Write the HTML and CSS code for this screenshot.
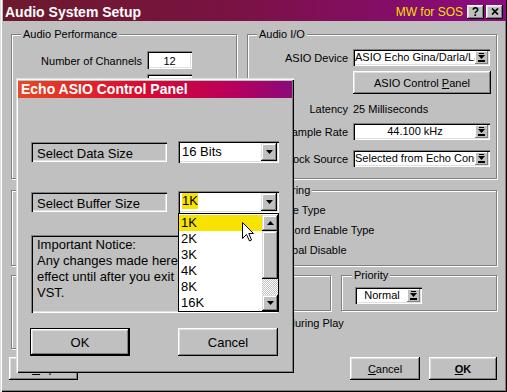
FILE: index.html
```html
<!DOCTYPE html>
<html lang="en">
<head>
    <meta charset="UTF-8">
    <meta name="viewport" content="width=device-width, initial-scale=1.0">
    <title>Audio System Setup</title>
    <link rel="stylesheet" href="styles.css">
</head>
<body>
    <div class="window">
        <div class="titlebar">
            <span class="title">Audio System Setup</span>
            <span class="brand">MW for SOS</span>
            <span class="tbtn">?</span>
            <span class="tbtn"><svg width="8" height="7" viewBox="0 0 8 7"><path d="M1 0.5l6 6M7 0.5l-6 6" stroke="#000" stroke-width="1.7"/></svg></span>
        </div>

        <div class="content">
            <div class="group perf">
                <span class="legend">Audio Performance</span>
                <div class="num-row first">
                    <span class="num-label">Number of Channels</span>
                    <span class="edit">12</span>
                </div>
                <div class="num-row">
                    <span class="num-label"></span>
                    <span class="edit"></span>
                </div>
            </div>

            <div class="group io">
                <span class="legend">Audio I/O</span>
                <div class="io-row first">
                    <span class="io-label">ASIO Device</span>
                    <div class="combo">
                        <span class="val">ASIO Echo Gina/Darla/Layla</span>
                        <span class="dd"><svg width="7" height="9" viewBox="0 0 7 9"><rect x="1" y="0" width="5" height="1"/><path d="M0 2h7L3.5 6z"/><rect x="0" y="7" width="7" height="2"/></svg></span>
                    </div>
                </div>
                <div class="io-row tall">
                    <span class="io-label"></span>
                    <div class="btn panel-btn">ASIO Control&nbsp;<u>P</u>anel</div>
                </div>
                <div class="io-row">
                    <span class="io-label">Latency</span>
                    <span>25 Milliseconds</span>
                </div>
                <div class="io-row">
                    <span class="io-label">Sample Rate</span>
                    <div class="combo">
                        <span class="val center">44.100 kHz</span>
                        <span class="dd"><svg width="7" height="9" viewBox="0 0 7 9"><rect x="1" y="0" width="5" height="1"/><path d="M0 2h7L3.5 6z"/><rect x="0" y="7" width="7" height="2"/></svg></span>
                    </div>
                </div>
                <div class="io-row clock">
                    <span class="io-label">Clock Source</span>
                    <div class="combo">
                        <span class="val">Selected from Echo Console</span>
                        <span class="dd"><svg width="7" height="9" viewBox="0 0 7 9"><rect x="1" y="0" width="5" height="1"/><path d="M0 2h7L3.5 6z"/><rect x="0" y="7" width="7" height="2"/></svg></span>
                    </div>
                </div>
            </div>

            <div class="group misc"></div>

            <div class="group monitor">
                <span class="legend">Monitoring</span>
                <div class="radio-row first"><span class="radio"></span>Tape Type</div>
                <div class="radio-row"><span class="radio on"></span>Record Enable Type</div>
                <div class="radio-row"><span class="radio"></span>Global Disable</div>
            </div>

            <div class="group sync"></div>

            <div class="right-stack">
                <div class="boxes">
                    <div class="group refbox"></div>
                    <div class="group priority">
                        <span class="legend">Priority</span>
                        <div class="combo prio">
                            <span class="val center">Normal</span>
                            <span class="dd"><svg width="7" height="9" viewBox="0 0 7 9"><rect x="1" y="0" width="5" height="1"/><path d="M0 2h7L3.5 6z"/><rect x="0" y="7" width="7" height="2"/></svg></span>
                        </div>
                    </div>
                </div>
                <div class="check-row"><span class="check"></span>Idle during Play</div>
            </div>

            <div class="footer">
                <div class="btn help"><u>H</u>elp</div>
                <div class="btn cancel"><u>C</u>ancel</div>
                <div class="btn ok"><b><u>O</u>K</b></div>
            </div>
        </div>

        <div class="dialog">
            <div class="dlg-title">Echo ASIO Control Panel</div>
            <div class="dlg-body">
                <div class="dlg-row first">
                    <span class="sunk-label">Select Data Size</span>
                    <div class="dropdown">
                        <span class="dd-val">16 Bits</span>
                        <span class="dd-btn"><svg width="7" height="4" viewBox="0 0 7 4"><path d="M0 0h7L3.5 4z"/></svg></span>
                    </div>
                </div>
                <div class="dlg-row">
                    <span class="sunk-label">Select Buffer Size</span>
                    <div class="dropdown open">
                        <span class="dd-val"><span class="sel">1K</span></span>
                        <span class="dd-btn"><svg width="7" height="4" viewBox="0 0 7 4"><path d="M0 0h7L3.5 4z"/></svg></span>
                        <div class="dd-list">
                            <div class="dd-items">
                                <div class="dd-item current">1K</div>
                                <div class="dd-item">2K</div>
                                <div class="dd-item">3K</div>
                                <div class="dd-item">4K</div>
                                <div class="dd-item">8K</div>
                                <div class="dd-item">16K</div>
                            </div>
                            <div class="scrollbar">
                                <span class="sb-btn"><svg width="7" height="4" viewBox="0 0 7 4"><path d="M3.5 0L7 4H0z"/></svg></span>
                                <span class="sb-thumb"></span>
                                <span class="sb-track"></span>
                                <span class="sb-btn"><svg width="7" height="4" viewBox="0 0 7 4"><path d="M0 0h7L3.5 4z"/></svg></span>
                            </div>
                        </div>
                    </div>
                </div>
                <div class="notice">Important Notice:<br>Any changes made here will not take<br>effect until after you exit and restart<br>VST.</div>
                <div class="dlg-buttons">
                    <div class="btn dlg-btn default">OK</div>
                    <div class="btn dlg-btn dlg-cancel">Cancel</div>
                </div>
            </div>
        </div>

        <svg class="cursor" width="13" height="20" viewBox="0 0 13 20"><path d="M0.5 0.5V16.5L4.5 12.5L7.5 19L9.5 18L6.8 11.5H11.5Z" fill="#fff" stroke="#000" stroke-width="1"/></svg>
    </div>
</body>
</html>
```

FILE: styles.css
```css
* {
    box-sizing: border-box;
}

body {
    margin: 0;
    font-family: "Liberation Sans", Arial, sans-serif;
    font-size: 11px;
    color: #000;
    background-color: #c0c0c0;
}

.window {
    position: relative;
    width: 507px;
    height: 392px;
    padding: 0 1px 3px 3px;
    overflow: hidden;
    background-color: #c0c0c0;
    box-shadow: inset 1px 0 #dfdfdf, inset 2px 0 #fff, inset -1px -1px #000, inset -2px -2px #808080;
}

/* title bar */
.titlebar {
    display: flex;
    align-items: center;
    height: 21px;
    padding: 0 3px 0 2px;
    background: linear-gradient(to right, #6c1a2c, #7a1242 45%, #8c0a82);
    color: #fff;
}

.title {
    flex: 1;
    font-size: 14px;
    font-weight: bold;
    padding-top: 3px;
}

.brand {
    color: #f4e000;
    font-size: 12px;
    padding-top: 3px;
    margin-right: 2px;
}

.tbtn {
    display: flex;
    align-items: center;
    justify-content: center;
    width: 17px;
    height: 14px;
    margin: 2px 0 0 2px;
    background-color: #c0c0c0;
    color: #000;
    font-size: 12px;
    font-weight: bold;
    box-shadow: inset -1px -1px #000, inset 1px 1px #fff, inset -2px -2px #808080, inset 2px 2px #dfdfdf;
}

/* shared controls */
.btn {
    display: flex;
    align-items: center;
    justify-content: center;
    background-color: #c0c0c0;
    box-shadow: inset -1px -1px #000, inset 1px 1px #fff, inset -2px -2px #808080, inset 2px 2px #dfdfdf;
}

.edit,
.combo,
.dropdown,
.sunk-label,
.notice,
.check {
    box-shadow: inset 1px 1px #808080, inset 2px 2px #000, inset -1px -1px #fff, inset -2px -2px #dfdfdf;
}

/* main window layout */
.content {
    display: grid;
    grid-template-columns: 226px 250px;
    grid-template-rows: 156px 85px 82px 23px;
    column-gap: 10px;
    padding: 13px 0 0 8px;
}

.group {
    align-self: start;
    border: 1px solid #808080;
    box-shadow: inset 1px 1px #fff, 1px 1px #fff;
}

.legend {
    display: block;
    width: max-content;
    height: 13px;
    line-height: 13px;
    margin: -7px 0 0 9px;
    padding: 0 2px;
    background-color: #c0c0c0;
}

.perf,
.io {
    height: 145px;
}

.misc,
.monitor {
    height: 76px;
}

.sync {
    height: 74px;
}

.num-row {
    display: flex;
    height: 18px;
    margin-top: 5px;
}

.num-row.first {
    margin-top: 10px;
}

.num-label {
    width: 130px;
    margin-right: 5px;
    padding-top: 2px;
    line-height: 16px;
    text-align: right;
}

.edit {
    width: 45px;
    padding-top: 2px;
    line-height: 16px;
    text-align: center;
    background-color: #fff;
}

.io-row {
    display: flex;
    align-items: center;
    height: 17px;
    margin-top: 6px;
}

.io-row.first {
    margin-top: 8px;
}

.io-row.tall {
    height: 23px;
    margin-top: 5px;
}

.io-row.clock {
    margin-top: 10px;
}

.io-label {
    width: 100px;
    margin-right: 5px;
    text-align: right;
}

.combo {
    display: flex;
    width: 137px;
    height: 17px;
    padding: 2px;
    background-color: #fff;
}

.combo .val {
    flex: 1;
    overflow: hidden;
    white-space: nowrap;
    line-height: 13px;
}

.combo .val.center {
    text-align: center;
}

.combo .dd {
    display: flex;
    align-items: center;
    justify-content: center;
    width: 13px;
    background-color: #c0c0c0;
    box-shadow: inset -1px -1px #808080, inset 1px 1px #fff;
}

.panel-btn {
    width: 138px;
    height: 23px;
}

.radio-row {
    display: flex;
    align-items: center;
    height: 20px;
    padding-left: 12px;
}

.radio-row.first {
    margin-top: 3px;
}

.radio {
    width: 12px;
    height: 12px;
    margin-right: 3px;
    border-radius: 50%;
    background-color: #fff;
    border: 1px solid #808080;
}

.radio.on {
    background: radial-gradient(circle, #000 2px, #fff 2.5px);
}

.right-stack {
    display: flex;
    flex-direction: column;
}

.boxes {
    display: flex;
    gap: 10px;
}

.refbox {
    width: 84px;
    height: 36px;
}

.priority {
    width: 156px;
    height: 36px;
}

.priority .legend {
    margin-left: 10px;
}

.combo.prio {
    width: 67px;
    margin: 5px 0 0 13px;
}

.check-row {
    display: flex;
    align-items: center;
    height: 17px;
    margin: 3px 0 0 4px;
}

.check {
    width: 13px;
    height: 13px;
    margin-right: 4px;
    background-color: #fff;
}

.footer {
    grid-column: 1 / -1;
    display: flex;
}

.help {
    width: 69px;
    margin-left: -2px;
}

.cancel {
    width: 70px;
    margin-left: auto;
}

.ok {
    width: 68px;
    margin-left: 9px;
}

/* echo dialog */
.dialog {
    position: absolute;
    left: 16px;
    top: 78px;
    width: 278px;
    height: 295px;
    padding: 3px 2px 2px;
    background-color: #c0c0c0;
    font-size: 13px;
    box-shadow: inset 1px 1px #dfdfdf, inset 2px 2px #fff, inset -1px -1px #000, inset -2px -2px #808080;
}

.dlg-title {
    height: 17px;
    line-height: 17px;
    padding-left: 3px;
    color: #fff;
    font-size: 14px;
    font-weight: bold;
    background: linear-gradient(to right, #e84822, #d80a30 45%, #b8005c 78%, #8a0a7a);
}

.dlg-body {
    display: flex;
    flex-direction: column;
    padding: 0 13px 0 12px;
}

.dlg-row {
    display: flex;
    justify-content: space-between;
    align-items: center;
    height: 22px;
    margin-top: 28px;
}

.dlg-row.first {
    margin-top: 43px;
}

.sunk-label {
    width: 136px;
    height: 20px;
    margin-left: 1px;
    padding: 3px 0 0 6px;
    line-height: 17px;
}

.dropdown {
    position: relative;
    display: flex;
    width: 101px;
    height: 22px;
    padding: 2px;
    background-color: #fff;
}

.dd-val {
    flex: 1;
    padding-left: 2px;
    line-height: 18px;
}

.sel {
    display: inline-block;
    vertical-align: top;
    line-height: 16px;
    background-color: #f8e200;
}

.dd-btn,
.sb-btn {
    display: flex;
    align-items: center;
    justify-content: center;
    width: 16px;
    background-color: #c0c0c0;
    box-shadow: inset -1px -1px #000, inset 1px 1px #dfdfdf, inset -2px -2px #808080, inset 2px 2px #fff;
}

.dd-list {
    position: absolute;
    top: 100%;
    left: 0;
    display: flex;
    width: 101px;
    height: 99px;
    padding-top: 1px;
    border: 1px solid #000;
    background-color: #fff;
}

.dd-items {
    flex: 1;
}

.dd-item {
    height: 16px;
    line-height: 16px;
    padding-left: 2px;
}

.dd-item.current {
    background-color: #f8e200;
}

.scrollbar {
    display: flex;
    flex-direction: column;
    width: 16px;
}

.sb-btn {
    height: 16px;
}

.sb-thumb {
    height: 48px;
    background-color: #c0c0c0;
    box-shadow: inset -1px -1px #000, inset 1px 1px #dfdfdf, inset -2px -2px #808080, inset 2px 2px #fff;
}

.sb-track {
    height: 16px;
    background: repeating-conic-gradient(#fff 0 25%, #c0c0c0 0 50%) 0 0 / 2px 2px;
}

.notice {
    width: 247px;
    height: 78px;
    margin: 22px 0 0 1px;
    padding: 2px 6px;
    line-height: 16px;
    white-space: nowrap;
    overflow: hidden;
}

.dlg-buttons {
    display: flex;
    justify-content: space-between;
    height: 28px;
    margin-top: 15px;
}

.dlg-btn {
    width: 100px;
}

.dlg-btn.default {
    box-shadow: inset 0 0 0 1px #000, inset -2px -2px #000, inset 2px 2px #fff, inset -3px -3px #808080, inset 3px 3px #dfdfdf;
}

.dlg-cancel {
    margin-right: 1px;
}

.cursor {
    position: absolute;
    left: 242px;
    top: 222px;
}
```
